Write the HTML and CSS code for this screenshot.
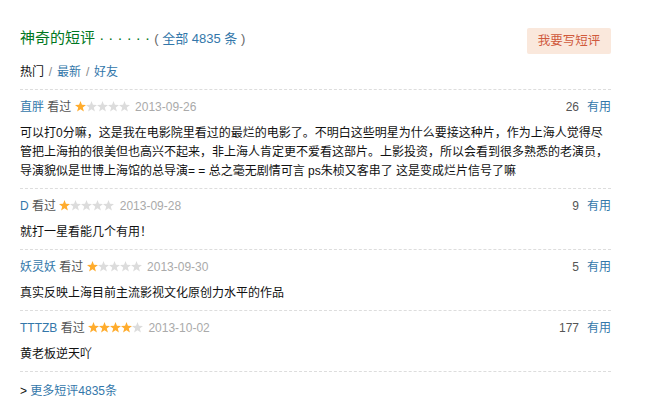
FILE: index.html
```html
<!DOCTYPE html>
<html lang="zh-CN">
<head>
<meta charset="utf-8">
<title>神奇的短评</title>
<link rel="stylesheet" href="styles.css">
</head>
<body>
<svg class="defs" width="0" height="0" aria-hidden="true">
  <defs>
    <polygon id="star" points="5.5,0 6.95,3.85 11,4 7.8,6.55 8.9,10.6 5.5,8.25 2.1,10.6 3.2,6.55 0,4 4.05,3.85"/>
  </defs>
</svg>
<div class="page">
  <div class="hd">
    <h2 class="title"><span class="title-name">神奇的短评</span> · · · · · · <span class="pl">( <a class="link">全部 4835 条</a> )</span></h2>
    <a class="btn-write">我要写短评</a>
  </div>
  <div class="tabs"><span class="tab-on">热门</span> <span class="sep">/</span> <a class="link">最新</a> <span class="sep">/</span> <a class="link">好友</a></div>

  <div class="comment-item">
    <div class="comment-hd">
      <span class="info"><a class="link">直胖</a> <span class="seen">看过</span> <svg class="stars" width="55" height="11" viewBox="0 0 55 11"><use href="#star" class="on"/><use href="#star" x="11" class="off"/><use href="#star" x="22" class="off"/><use href="#star" x="33" class="off"/><use href="#star" x="44" class="off"/></svg> <span class="date">2013-09-26</span></span>
      <span class="votes"><span class="count">26</span><a class="link">有用</a></span>
    </div>
    <p class="comment-text">可以打0分嘛，这是我在电影院里看过的最烂的电影了。不明白这些明星为什么要接这种片，作为上海人觉得尽管把上海拍的很美但也高兴不起来，非上海人肯定更不爱看这部片。上影投资，所以会看到很多熟悉的老演员，导演貌似是世博上海馆的总导演= = 总之毫无剧情可言 ps朱桢又客串了 这是变成烂片信号了嘛</p>
  </div>

  <div class="comment-item">
    <div class="comment-hd">
      <span class="info"><a class="link">D</a> <span class="seen">看过</span> <svg class="stars" width="55" height="11" viewBox="0 0 55 11"><use href="#star" class="on"/><use href="#star" x="11" class="off"/><use href="#star" x="22" class="off"/><use href="#star" x="33" class="off"/><use href="#star" x="44" class="off"/></svg> <span class="date">2013-09-28</span></span>
      <span class="votes"><span class="count">9</span><a class="link">有用</a></span>
    </div>
    <p class="comment-text">就打一星看能几个有用！</p>
  </div>

  <div class="comment-item">
    <div class="comment-hd">
      <span class="info"><a class="link">妖灵妖</a> <span class="seen">看过</span> <svg class="stars" width="55" height="11" viewBox="0 0 55 11"><use href="#star" class="on"/><use href="#star" x="11" class="off"/><use href="#star" x="22" class="off"/><use href="#star" x="33" class="off"/><use href="#star" x="44" class="off"/></svg> <span class="date">2013-09-30</span></span>
      <span class="votes"><span class="count">5</span><a class="link">有用</a></span>
    </div>
    <p class="comment-text">真实反映上海目前主流影视文化原创力水平的作品</p>
  </div>

  <div class="comment-item">
    <div class="comment-hd">
      <span class="info"><a class="link">TTTZB</a> <span class="seen">看过</span> <svg class="stars" width="55" height="11" viewBox="0 0 55 11"><use href="#star" class="on"/><use href="#star" x="11" class="on"/><use href="#star" x="22" class="on"/><use href="#star" x="33" class="on"/><use href="#star" x="44" class="off"/></svg> <span class="date">2013-10-02</span></span>
      <span class="votes"><span class="count">177</span><a class="link">有用</a></span>
    </div>
    <p class="comment-text">黄老板逆天吖</p>
  </div>

  <div class="more">&gt; <a class="link">更多短评4835条</a></div>
</div>
</body>
</html>
```

FILE: styles.css
```css
html, body {
  margin: 0;
  padding: 0;
  background: #fff;
}

body {
  font-family: "Liberation Sans", "Noto Sans CJK SC", sans-serif;
  font-size: 12px;
  color: #111;
}

.defs {
  position: absolute;
  width: 0;
  height: 0;
  overflow: hidden;
}

.page {
  padding: 27px 47px 0 20px;
}

.link {
  color: #37a;
  text-decoration: none;
}

.hd {
  display: flex;
  justify-content: space-between;
  align-items: flex-start;
}

.title {
  margin: 0;
  font-size: 15px;
  font-weight: normal;
  line-height: 21px;
  color: #072;
}

.title .pl {
  font-size: 13px;
  color: #666;
}

.btn-write {
  margin-top: 1px;
  width: 84px;
  height: 26px;
  line-height: 26px;
  text-align: center;
  background: #fae8dc;
  color: #d05a3c;
  font-size: 12.5px;
  border-radius: 2px;
}

.tabs {
  margin-top: 9px;
  line-height: 18px;
  padding-bottom: 8px;
  border-bottom: 1px dashed #ddd;
}

.tabs .tab-on {
  color: #111;
}

.tabs .sep {
  color: #888;
  margin: 0 1.5px;
}

.comment-item {
  padding: 7px 0;
  border-bottom: 1px dashed #ddd;
}

.comment-hd {
  display: flex;
  justify-content: space-between;
  align-items: center;
  height: 20px;
  line-height: 20px;
}

.seen {
  color: #555;
}

.stars {
  vertical-align: -1px;
  margin-right: 2px;
}

.stars .on {
  fill: #ffac2d;
}

.stars .off {
  fill: #dcdcdc;
}

.date {
  color: #aaa;
}

.count {
  color: #555;
  margin-right: 8px;
}

.comment-text {
  margin: 7px 0 0;
  line-height: 19px;
}

.more {
  padding-top: 10px;
  line-height: 18px;
}
```
